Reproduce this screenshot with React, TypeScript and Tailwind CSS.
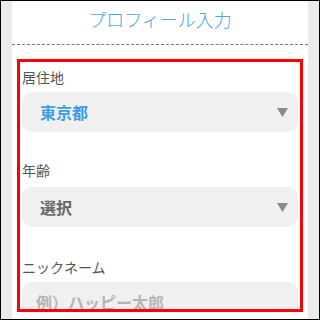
import React from 'react';

const font = { fontFamily: '"Noto Sans CJK JP", "Noto Sans", sans-serif' };

const Arrow = () => (
  <svg width="11" height="9" viewBox="0 0 11 9" className="shrink-0">
    <path d="M0 0 H11 L5.5 9 Z" fill="#8a8a8a" />
  </svg>
);

interface SelectBoxProps {
  value: string;
  className: string;
}

const SelectBox: React.FC<SelectBoxProps> = ({ value, className }) => (
  <div className="flex h-[40px] items-center justify-between rounded-[10px] bg-[#f0f0f0] pl-[18px] pr-[10px]">
    <span className={`text-[16px] font-bold ${className}`}>{value}</span>
    <Arrow />
  </div>
);

export default function App() {
  return (
    <div
      className="flex h-[320px] w-[320px] border border-black bg-[#ebebeb]"
      style={font}
    >
      <div className="mx-[11px] flex flex-1 flex-col bg-white">
        {/* ヘッダー */}
        <div className="flex h-[36px] items-center justify-center text-[18px] font-light text-[#4aa6ea]">
          プロフィール入力
        </div>
        <div className="mt-[7px] border-t border-dashed border-[#777]" />

        {/* フォーム */}
        <div className="mx-[5px] mt-[14px] h-[253px] overflow-hidden border-[3px] border-[#ff0000] px-[2px]">
          <div className="pt-[5px] text-[14px] leading-[20px] text-[#555]">居住地</div>
          <div className="mt-[5px]">
            <SelectBox value="東京都" className="text-[#3a9fe6]" />
          </div>

          <div className="mt-[28px] text-[14px] leading-[20px] text-[#555]">年齢</div>
          <div className="mt-[7px]">
            <SelectBox value="選択" className="text-[#666]" />
          </div>

          <div className="mt-[30px] text-[14px] leading-[20px] text-[#555]">ニックネーム</div>
          <div className="mt-[5px] flex h-[40px] items-center rounded-[10px] bg-[#f0f0f0] pl-[14px]">
            <span className="text-[16px] font-bold text-[#b5b5b5]">例）ハッピー太郎</span>
          </div>
        </div>
      </div>
    </div>
  );
}
